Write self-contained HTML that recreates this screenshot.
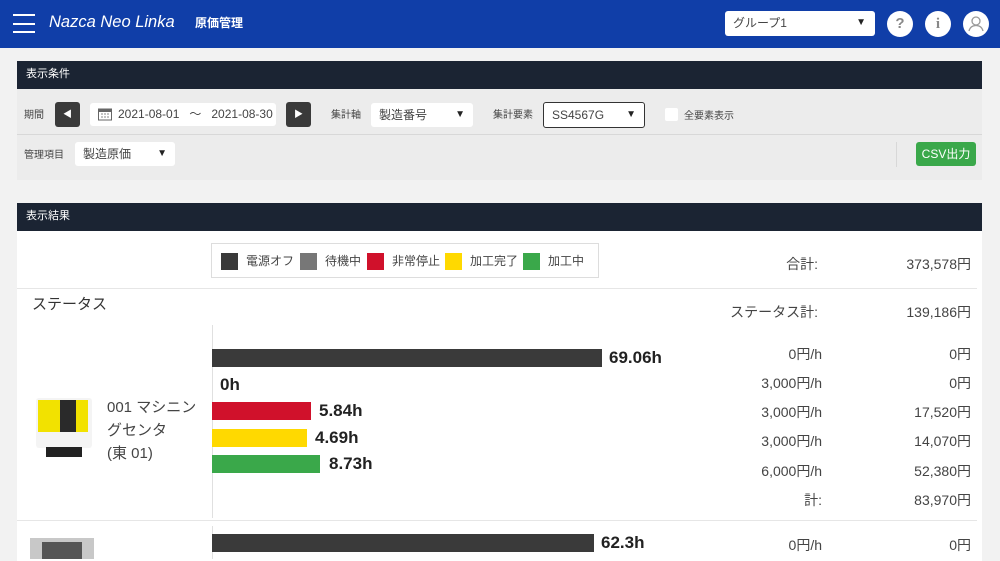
<!DOCTYPE html>
<html><head><meta charset="utf-8"><style>
*{margin:0;padding:0;box-sizing:border-box}
body{width:1000px;height:559px;overflow:hidden;background:#f2f2f2;font-family:"Liberation Sans","Noto Sans CJK JP",sans-serif;position:relative;color:#333}
.a{position:absolute}
.hdr{left:0;top:0;width:1000px;height:48px;background:#103ea8}
.sel{background:#fff;border-radius:3px;font-size:12px;color:#444;padding-left:8px;line-height:24px}
.circ{width:26px;height:26px;border-radius:50%;background:#fff;color:#888;text-align:center;line-height:26px;font-size:15px}
.ph{background:#1b2433;color:#fff;font-size:11px;line-height:27px;padding-left:9px}
.lbl{font-size:10px;color:#444;line-height:12px}
.r{text-align:right;font-size:14px;color:#444;line-height:18px}
.bar{height:18px}
.bv{font-weight:bold;font-size:17px;color:#222;line-height:20px}
.sw{width:17px;height:17px}
.lt{font-size:12px;color:#444;line-height:16px}
</style></head><body>
<div class="a hdr"></div>
<div class="a" style="left:13px;top:14px;width:22px;height:2px;background:#fff"></div>
<div class="a" style="left:13px;top:23px;width:22px;height:2px;background:#fff"></div>
<div class="a" style="left:13px;top:31px;width:22px;height:2px;background:#fff"></div>
<div class="a" style="left:49px;top:13px;color:#fff;font-style:italic;font-size:16.5px">Nazca Neo Linka</div>
<div class="a" style="left:195px;top:16px;color:#fff;font-weight:bold;font-size:12px;line-height:14px">原価管理</div>
<div class="a sel" style="left:725px;top:11px;width:150px;height:25px">グループ1<span style="position:absolute;right:9px;font-size:10px;color:#222">▼</span></div>
<div class="a circ" style="left:887px;top:11px;font-weight:bold">?</div>
<div class="a circ" style="left:925px;top:11px;font-family:'Liberation Serif',serif;font-weight:bold">i</div>
<div class="a circ" style="left:963px;top:11px"><svg width="26" height="26"><circle cx="13" cy="10" r="4" fill="none" stroke="#999" stroke-width="1.3"/><path d="M6 20c1-4 4-5.5 7-5.5s6 1.5 7 5.5" fill="none" stroke="#999" stroke-width="1.3"/></svg></div>

<div class="a ph" style="left:17px;top:61px;width:965px;height:28px">表示条件</div>
<div class="a" style="left:17px;top:89px;width:965px;height:91px;background:#ececec"></div>
<div class="a" style="left:17px;top:134px;width:965px;height:1px;background:#d8d8d8"></div>
<div class="a lbl" style="left:24px;top:110px">期間</div>
<div class="a" style="left:55px;top:102px;width:25px;height:25px;background:#3a3a3a;border-radius:3px;color:#fff;font-size:9px;text-align:center;line-height:25px">◀</div>
<div class="a" style="left:90px;top:103px;width:186px;height:23px;background:#fff;border-radius:3px;font-size:12px;color:#444;line-height:23px;padding-left:28px">2021-08-01 &nbsp;&nbsp;～ &nbsp;&nbsp;2021-08-30</div>
<svg class="a" style="left:97px;top:106px" width="16" height="16"><rect x="1.5" y="3" width="13" height="11" fill="none" stroke="#666"/><rect x="1.5" y="3" width="13" height="3" fill="#666"/><path d="M4 8h2M7 8h2M10 8h2M4 11h2M7 11h2M10 11h2" stroke="#888"/></svg>
<div class="a" style="left:286px;top:102px;width:25px;height:25px;background:#3a3a3a;border-radius:3px;color:#fff;font-size:9px;text-align:center;line-height:25px">▶</div>
<div class="a lbl" style="left:331px;top:110px">集計軸</div>
<div class="a sel" style="left:371px;top:103px;width:102px;height:24px">製造番号<span style="position:absolute;right:8px;font-size:10px;color:#222">▼</span></div>
<div class="a lbl" style="left:493px;top:110px">集計要素</div>
<div class="a sel" style="left:543px;top:102px;width:102px;height:26px;border:1.5px solid #333">SS4567G<span style="position:absolute;right:8px;font-size:10px;color:#222">▼</span></div>
<div class="a" style="left:665px;top:108px;width:13px;height:13px;background:#fff;border-radius:2px"></div>
<div class="a lbl" style="left:684px;top:111px">全要素表示</div>
<div class="a lbl" style="left:24px;top:150px">管理項目</div>
<div class="a sel" style="left:75px;top:142px;width:100px;height:24px">製造原価<span style="position:absolute;right:8px;font-size:10px;color:#222">▼</span></div>
<div class="a" style="left:896px;top:142px;width:1px;height:25px;background:#d8d8d8"></div>
<div class="a" style="left:916px;top:142px;width:60px;height:24px;background:#3aa84a;border-radius:3px;color:#fff;font-size:12px;text-align:center;line-height:24px">CSV出力</div>

<div class="a ph" style="left:17px;top:203px;width:965px;height:28px">表示結果</div>
<div class="a" style="left:17px;top:231px;width:965px;height:330px;background:#fff"></div>
<div class="a" style="left:211px;top:243px;width:388px;height:35px;border:1px solid #ddd"></div>
<div class="a sw" style="left:221px;top:253px;background:#3a3a3a"></div><div class="a lt" style="left:246px;top:253px">電源オフ</div>
<div class="a sw" style="left:300px;top:253px;background:#777"></div><div class="a lt" style="left:325px;top:253px">待機中</div>
<div class="a sw" style="left:367px;top:253px;background:#d0112b"></div><div class="a lt" style="left:392px;top:253px">非常停止</div>
<div class="a sw" style="left:445px;top:253px;background:#ffd900"></div><div class="a lt" style="left:470px;top:253px">加工完了</div>
<div class="a sw" style="left:523px;top:253px;background:#3aa84a"></div><div class="a lt" style="left:548px;top:253px">加工中</div>
<div class="a r" style="left:700px;top:255px;width:118px">合計:</div>
<div class="a r" style="left:850px;top:255px;width:121px">373,578円</div>
<div class="a" style="left:17px;top:288px;width:960px;height:1px;background:#e6e6e6"></div>
<div class="a" style="left:32px;top:293px;font-size:15px;color:#333">ステータス</div>
<div class="a r" style="left:680px;top:303px;width:138px">ステータス計:</div>
<div class="a r" style="left:850px;top:303px;width:121px">139,186円</div>
<div class="a" style="left:212px;top:325px;width:1px;height:193px;background:#e0e0e0"></div>
<div class="a" style="left:36px;top:398px;width:56px;height:50px;background:#f4f4f4;border-radius:3px"></div>
<div class="a" style="left:38px;top:400px;width:50px;height:32px;background:#f2e200"></div>
<div class="a" style="left:60px;top:400px;width:16px;height:32px;background:#2a2a2a"></div>
<div class="a" style="left:46px;top:447px;width:36px;height:10px;background:#222"></div>
<div class="a" style="left:107px;top:396px;font-size:15px;line-height:23px;color:#444">001 マシニン<br>グセンタ<br>(東 01)</div>
<div class="a bar" style="left:212px;top:349px;width:390px;background:#3a3a3a"></div><div class="a bv" style="left:609px;top:348px">69.06h</div>
<div class="a bv" style="left:220px;top:375px">0h</div>
<div class="a bar" style="left:212px;top:402px;width:99px;background:#d0112b"></div><div class="a bv" style="left:319px;top:401px">5.84h</div>
<div class="a bar" style="left:212px;top:429px;width:95px;background:#ffd900"></div><div class="a bv" style="left:315px;top:428px">4.69h</div>
<div class="a bar" style="left:212px;top:455px;width:108px;background:#3aa84a"></div><div class="a bv" style="left:329px;top:454px">8.73h</div>
<div class="a r" style="left:700px;top:345px;width:122px">0円/h</div><div class="a r" style="left:850px;top:345px;width:121px">0円</div>
<div class="a r" style="left:700px;top:374px;width:122px">3,000円/h</div><div class="a r" style="left:850px;top:374px;width:121px">0円</div>
<div class="a r" style="left:700px;top:403px;width:122px">3,000円/h</div><div class="a r" style="left:850px;top:403px;width:121px">17,520円</div>
<div class="a r" style="left:700px;top:432px;width:122px">3,000円/h</div><div class="a r" style="left:850px;top:432px;width:121px">14,070円</div>
<div class="a r" style="left:700px;top:462px;width:122px">6,000円/h</div><div class="a r" style="left:850px;top:462px;width:121px">52,380円</div>
<div class="a r" style="left:700px;top:491px;width:122px">計:</div><div class="a r" style="left:850px;top:491px;width:121px">83,970円</div>
<div class="a" style="left:17px;top:520px;width:960px;height:1px;background:#e6e6e6"></div>
<div class="a" style="left:212px;top:526px;width:1px;height:33px;background:#e0e0e0"></div>
<div class="a" style="left:30px;top:538px;width:64px;height:21px;background:#c8c8c8"></div>
<div class="a" style="left:42px;top:542px;width:40px;height:17px;background:#555"></div>
<div class="a bar" style="left:212px;top:534px;width:382px;background:#3a3a3a"></div><div class="a bv" style="left:601px;top:533px">62.3h</div>
<div class="a r" style="left:700px;top:536px;width:122px">0円/h</div><div class="a r" style="left:850px;top:536px;width:121px">0円</div>
</body></html>
